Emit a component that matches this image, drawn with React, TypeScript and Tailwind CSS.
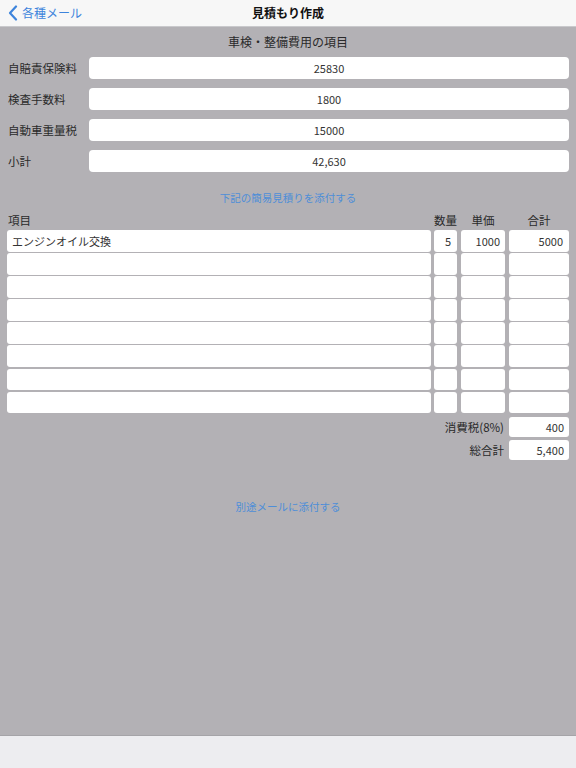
import React from "react";

const topFields = [
  { label: "自賠責保険料", value: "25830" },
  { label: "検査手数料", value: "1800" },
  { label: "自動車重量税", value: "15000" },
  { label: "小計", value: "42,630" },
];

const rows = [
  { item: "エンジンオイル交換", qty: "5", price: "1000", total: "5000" },
  { item: "", qty: "", price: "", total: "" },
  { item: "", qty: "", price: "", total: "" },
  { item: "", qty: "", price: "", total: "" },
  { item: "", qty: "", price: "", total: "" },
  { item: "", qty: "", price: "", total: "" },
  { item: "", qty: "", price: "", total: "" },
  { item: "", qty: "", price: "", total: "" },
];

export default function App() {
  return (
    <div className="w-[576px] h-[768px] flex flex-col bg-[#b3b1b5] font-['Noto_Sans_CJK_JP','Noto_Sans',sans-serif] text-[#222] overflow-hidden">
      {/* Nav bar */}
      <div className="h-[27px] shrink-0 bg-[#f7f7f7] border-b border-[#c9c9cc] flex items-center relative">
        <div className="flex items-center pl-[8px] text-[#3d84dc]">
          <svg width="10" height="16" viewBox="0 0 10 16" className="mr-[4px]">
            <path d="M8 1.5 L2 8 L8 14.5" fill="none" stroke="#3d84dc" strokeWidth="2.2" strokeLinecap="round" strokeLinejoin="round" />
          </svg>
          <span className="text-[12px] leading-[14px]">各種メール</span>
        </div>
        <div className="absolute left-0 right-0 top-0 h-full flex items-center justify-center pointer-events-none">
          <span className="text-[12px] leading-[14px] font-bold text-[#111]">見積もり作成</span>
        </div>
      </div>

      {/* Section title */}
      <div className="h-[30px] shrink-0 flex items-center justify-center">
        <span className="text-[12px] leading-[14px] text-[#2a2a2a]">車検・整備費用の項目</span>
      </div>

      {/* Top fields */}
      <div className="flex flex-col gap-[9px] px-[7px]">
        {topFields.map((f) => (
          <div key={f.label} className="flex items-center h-[22px]">
            <div className="w-[82px] pl-[1px] text-[11.5px] leading-[14px] text-[#2a2a2a]">{f.label}</div>
            <div className="flex-1 h-[22px] bg-white rounded-[4px] flex items-center justify-center text-[11px] leading-[14px] text-[#333]">
              {f.value}
            </div>
          </div>
        ))}
      </div>

      {/* Link */}
      <div className="pt-[19px] flex justify-center">
        <span className="text-[10.5px] leading-[14px] text-[#4e8ed8]">下記の簡易見積りを添付する</span>
      </div>

      {/* Table header */}
      <div className="pt-[8px] px-[7px] flex text-[11.5px] leading-[14px] text-[#2a2a2a]">
        <div className="w-[424px] pl-[1px]">項目</div>
        <div className="w-[23px] ml-[3px] flex justify-center whitespace-nowrap">数量</div>
        <div className="w-[44px] ml-[4px] flex justify-center">単価</div>
        <div className="w-[60px] ml-[4px] flex justify-center">合計</div>
      </div>

      {/* Rows */}
      <div className="mt-[3px] px-[7px] flex flex-col gap-[1.6px]">
        {rows.map((r, i) => (
          <div key={i} className="flex h-[21.5px] text-[11px] leading-[14px] text-[#333]">
            <div className="w-[424px] bg-white rounded-[3px] flex items-center pl-[5px]">{r.item}</div>
            <div className="w-[23px] ml-[3px] bg-white rounded-[3px] flex items-center justify-end pr-[6px]">{r.qty}</div>
            <div className="w-[44px] ml-[4px] bg-white rounded-[3px] flex items-center justify-end pr-[5px]">{r.price}</div>
            <div className="w-[60px] ml-[4px] bg-white rounded-[3px] flex items-center justify-end pr-[6px]">{r.total}</div>
          </div>
        ))}
      </div>

      {/* Totals */}
      <div className="mt-[4px] px-[7px] flex flex-col gap-[3px]">
        <div className="flex items-center justify-end h-[20px]">
          <span className="text-[11.5px] leading-[14px] text-[#2a2a2a] mr-[5px]">消費税(8%)</span>
          <div className="w-[60px] h-[20px] bg-white rounded-[3px] flex items-center justify-end pr-[5px] text-[11px] leading-[14px] text-[#333]">400</div>
        </div>
        <div className="flex items-center justify-end h-[20px]">
          <span className="text-[11.5px] leading-[14px] text-[#2a2a2a] mr-[5px]">総合計</span>
          <div className="w-[60px] h-[20px] bg-white rounded-[3px] flex items-center justify-end pr-[5px] text-[11px] leading-[14px] text-[#333]">5,400</div>
        </div>
      </div>

      {/* Second link */}
      <div className="pt-[40px] flex justify-center">
        <span className="text-[10.5px] leading-[14px] text-[#4e8ed8]">別途メールに添付する</span>
      </div>

      <div className="flex-1" />

      {/* Bottom toolbar */}
      <div className="h-[33px] shrink-0 bg-[#ededf0] border-t border-[#a5a4a8]" />
    </div>
  );
}
